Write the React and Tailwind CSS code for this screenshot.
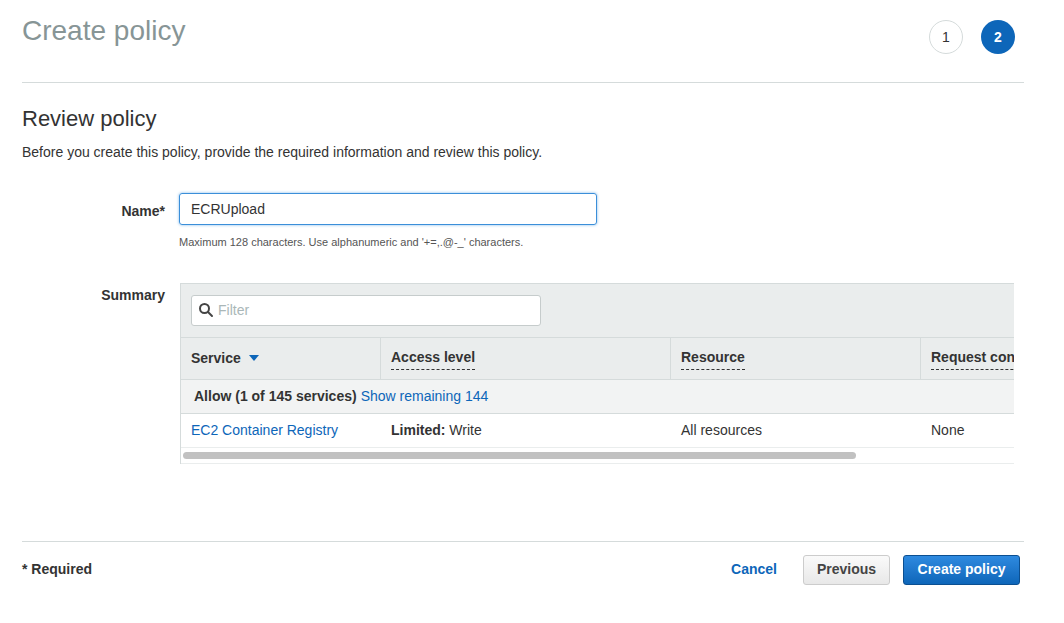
import React from "react";

const font = { fontFamily: '"Liberation Sans", Arial, sans-serif' };

function Dashed({ children }) {
  return <span className="border-b border-dashed border-[#333] pb-[1px]">{children}</span>;
}

export default function App() {
  return (
    <div style={font} className="w-[1064px] h-[623px] bg-white text-[#333] px-[22px] overflow-hidden">
      {/* Header */}
      <div className="flex items-start justify-between w-[1002px] h-[83px] border-b border-[#d5dbdb]">
        <h1 className="text-[28px] text-[#879596] mt-[17px] leading-none">Create policy</h1>
        <div className="flex gap-[18px] mt-[20px] mr-[9px]">
          <div className="w-[34px] h-[34px] rounded-full border border-[#d5dbdb] flex items-center justify-center text-[14px] text-[#333]">1</div>
          <div className="w-[34px] h-[34px] rounded-full bg-[#0d66b9] flex items-center justify-center text-[14px] text-white font-bold">2</div>
        </div>
      </div>

      <h2 className="text-[22px] mt-[25px] leading-none">Review policy</h2>
      <p className="text-[14px] mt-[12px]">Before you create this policy, provide the required information and review this policy.</p>

      {/* Name */}
      <div className="flex mt-[30px]">
        <label className="w-[143px] text-right text-[14px] font-bold pt-[8px]">Name*</label>
        <div className="ml-[14px]">
          <input readOnly value="ECRUpload" style={font}
            className="w-[418px] h-[32px] px-[11px] text-[14px] text-[#333] border border-[#3b8fd9] rounded-[3px] shadow-[0_0_3px_#7fb8ea] outline-none" />
          <div className="text-[11px] text-[#555] mt-[9px]">Maximum 128 characters. Use alphanumeric and '+=,.@-_' characters.</div>
        </div>
      </div>

      {/* Summary */}
      <div className="flex mt-[32px]">
        <label className="w-[143px] text-right text-[14px] font-bold pt-[2px]">Summary</label>
        <div className="ml-[15px] w-[834px] overflow-hidden border-t border-l border-[#d5dbdb]">
          <div className="w-[1100px] text-[14px]">
            <div className="h-[54px] bg-[#eaeded] flex items-center px-[10px] border-b border-[#d5dbdb]">
              <div className="w-[350px] h-[31px] bg-white border border-[#c6cccc] rounded-[3px] flex items-center px-[6px] gap-[4px] text-[#aab7b8]">
                <svg width="16" height="16" viewBox="0 0 16 16" fill="none" stroke="#444" strokeWidth="2">
                  <circle cx="6.5" cy="6.5" r="4.5" />
                  <path d="M10 10l4 4" strokeLinecap="round" />
                </svg>
                <span>Filter</span>
              </div>
            </div>
            <div className="flex h-[42px] bg-[#eaeded] font-bold border-b border-[#d5dbdb]">
              <div className="w-[200px] flex items-center px-[10px] gap-[8px] border-r border-[#d5dbdb]">
                Service
                <svg width="10" height="6" viewBox="0 0 10 6"><path d="M0 0h10L5 6z" fill="#0d66b9" /></svg>
              </div>
              <div className="w-[290px] flex items-center px-[10px] border-r border-[#d5dbdb]"><Dashed>Access level</Dashed></div>
              <div className="w-[250px] flex items-center px-[10px] border-r border-[#d5dbdb]"><Dashed>Resource</Dashed></div>
              <div className="flex-1 flex items-center px-[10px]"><Dashed>Request condition</Dashed></div>
            </div>
            <div className="h-[34px] bg-[#f2f3f3] flex items-center px-[13px] border-b border-[#d5dbdb]">
              <span className="font-bold">Allow (1 of 145 services)</span>
              <span className="text-[#0d66b9] ml-[4px]">Show remaining 144</span>
            </div>
            <div className="flex h-[34px] items-center border-b border-[#eaeded]">
              <div className="w-[200px] px-[10px] text-[#0d66b9]">EC2 Container Registry</div>
              <div className="w-[290px] px-[10px]"><span className="font-bold">Limited:</span> Write</div>
              <div className="w-[250px] px-[10px]">All resources</div>
              <div className="flex-1 px-[10px]">None</div>
            </div>
            <div className="h-[16px] flex items-center px-[2px] border-b border-[#eaeded]">
              <div className="w-[673px] h-[7px] rounded-full bg-[#c1c1c1]" />
            </div>
          </div>
        </div>
      </div>

      {/* Footer */}
      <div className="w-[1002px] mt-[77px] border-t border-[#d5dbdb] flex items-center justify-between pt-[13px]">
        <span className="text-[14px] font-bold">* Required</span>
        <div className="flex items-center">
          <span className="text-[14px] font-bold text-[#0d66b9] mr-[26px]">Cancel</span>
          <button style={font} className="w-[87px] h-[30px] text-[14px] font-bold text-[#444] bg-gradient-to-b from-[#fafafa] to-[#e8e8e8] border border-[#ccc] rounded-[3px] mr-[13px]">Previous</button>
          <button style={font} className="w-[117px] h-[30px] text-[14px] font-bold text-white bg-gradient-to-b from-[#2e8ae0] to-[#0d66b9] border border-[#0b4f91] rounded-[3px] mr-[4px]">Create policy</button>
        </div>
      </div>
    </div>
  );
}
